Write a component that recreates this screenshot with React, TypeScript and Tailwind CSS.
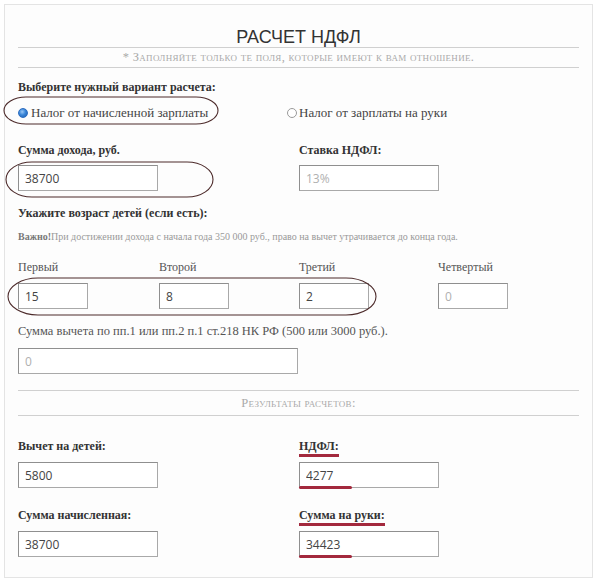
import React from "react"

const serif = "font-['Liberation_Serif',serif]"

function Field({ value, muted, w = "w-[140px]", mark }: { value: string; muted?: boolean; w?: string; mark?: boolean }) {
  return (
    <div className={`relative ${w} h-[26px]`}>
      <input
        readOnly
        value={value}
        className={`w-full h-full border border-[#a9a9a9] border-t-[#8f8f8f] border-l-[#8f8f8f] bg-white px-[6px] text-[12px] font-['Open_Sans',sans-serif] outline-none ${
          muted ? "text-[#b0b0b0]" : "text-[#444]"
        }`}
      />
      {mark && <span className="absolute left-0 bottom-[-1px] w-[53px] h-[3px] bg-[#a3293d] rounded-full" />}
    </div>
  )
}

function Divider() {
  return <div className="border-t border-[#d0d0d0]" />
}

export default function App() {
  return (
    <div className={`relative w-[600px] h-[585px] bg-white ${serif}`}>
      <div className="ml-[4px] pt-[4px] w-[589px]">
        <div className="border border-[#e4e4e4] bg-[#fdfdfd] px-[13px] pb-[20px]">
          {/* header */}
          <div className="mt-[22px] h-[20px] text-center text-[18px] leading-[20px] text-[#333] font-['Liberation_Sans',sans-serif]">
            РАСЧЕТ НДФЛ
          </div>
          <Divider />
          <div className="h-[19px] flex items-center justify-center text-[12.5px] text-[#aaa] [font-variant:small-caps] tracking-[0.3px]">
            * Заполняйте только те поля, которые имеют к вам отношение.
          </div>
          <Divider />

          <div className="mt-[11px] h-[16px] leading-[16px] text-[12px] font-bold text-[#333]">
            Выберите нужный вариант расчета:
          </div>
          <div className="mt-[8px] h-[16px] grid grid-cols-[269px_1fr] text-[13px] text-[#444]">
            <div className="flex items-center">
              <span className="w-[10px] h-[10px] rounded-full bg-[radial-gradient(circle_at_40%_35%,#9cc8f5_0%,#3a86d8_45%,#1f5fb0_100%)] border border-[#2c6cc0]" />
              <span className="ml-[3px]">Налог от начисленной зарплаты</span>
            </div>
            <div className="flex items-center">
              <span className="w-[10px] h-[10px] rounded-full border border-[#9a9a9a] bg-white" />
              <span className="ml-[2px]">Налог от зарплаты на руки</span>
            </div>
          </div>

          <div className="mt-[23px] grid grid-cols-[281px_1fr] text-[12px] font-bold text-[#333] leading-[16px]">
            <span>Сумма дохода, руб.</span>
            <span>Ставка НДФЛ:</span>
          </div>
          <div className="mt-[7px] grid grid-cols-[281px_1fr]">
            <Field value="38700" />
            <Field value="13%" muted />
          </div>

          <div className="mt-[14px] h-[16px] leading-[16px] text-[12px] font-bold text-[#333]">
            Укажите возраст детей (если есть):
          </div>
          <div className="mt-[10px] h-[12px] leading-[12px] text-[10px] text-[#999]">
            <b className="text-[#777]">Важно!</b>При достижении дохода с начала года 350 000 руб., право на вычет утрачивается до конца года.
          </div>

          <div className="mt-[16px] grid grid-cols-[141px_140px_139px_1fr] text-[12px] text-[#555] leading-[16px]">
            <span>Первый</span>
            <span>Второй</span>
            <span>Третий</span>
            <span>Четвертый</span>
          </div>
          <div className="mt-[8px] grid grid-cols-[141px_140px_139px_1fr]">
            <Field value="15" w="w-[70px]" />
            <Field value="8" w="w-[70px]" />
            <Field value="2" w="w-[70px]" />
            <Field value="0" w="w-[70px]" muted />
          </div>

          <div className="mt-[14px] h-[16px] leading-[16px] text-[12.5px] text-[#555]">
            Сумма вычета по пп.1 или пп.2 п.1 ст.218 НК РФ (500 или 3000 руб.).
          </div>
          <div className="mt-[9px]">
            <Field value="0" w="w-[280px]" muted />
          </div>

          <div className="mt-[16px]">
            <Divider />
          </div>
          <div className="h-[24px] flex items-center justify-center text-[12.5px] text-[#aaa] [font-variant:small-caps] tracking-[0.3px]">
            Результаты расчетов:
          </div>
          <Divider />

          <div className="mt-[22px] grid grid-cols-[281px_1fr] text-[12px] font-bold text-[#333] leading-[16px]">
            <span>Вычет на детей:</span>
            <span>
              <span className="border-b-[3px] border-[#a3293d] pb-[1px]">НДФЛ:</span>
            </span>
          </div>
          <div className="mt-[8px] grid grid-cols-[281px_1fr]">
            <Field value="5800" />
            <Field value="4277" mark />
          </div>

          <div className="mt-[19px] grid grid-cols-[281px_1fr] text-[12px] font-bold text-[#333] leading-[16px]">
            <span>Сумма начисленная:</span>
            <span>
              <span className="border-b-[3px] border-[#a3293d] pb-[1px]">Сумма на руки:</span>
            </span>
          </div>
          <div className="mt-[8px] grid grid-cols-[281px_1fr]">
            <Field value="38700" />
            <Field value="34423" mark />
          </div>
        </div>
      </div>

      {/* hand-drawn annotation loops */}
      <svg className="absolute inset-0 pointer-events-none" width="600" height="585" viewBox="0 0 600 585">
        <g fill="none" stroke="#4d2b2b" strokeWidth="1.1">
          <rect x="4" y="97" width="214" height="27" rx="22" ry="13.5" />
          <rect x="6" y="162" width="207" height="35" rx="26" ry="17.5" />
          <rect x="8" y="278" width="368" height="37" rx="30" ry="18.5" />
        </g>
      </svg>
    </div>
  )
}
